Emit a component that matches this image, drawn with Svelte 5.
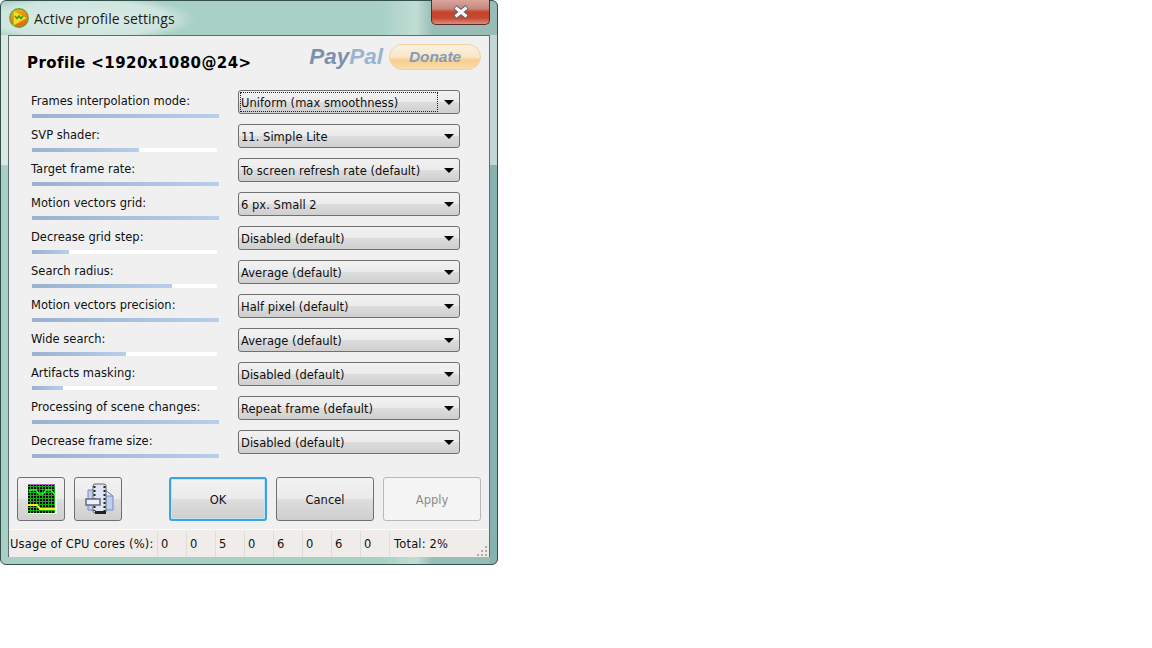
<script>
  const rows = [
    { label: 'Frames interpolation mode:', value: 'Uniform (max smoothness)', fill: 187, focus: true },
    { label: 'SVP shader:', value: '11. Simple Lite', fill: 107 },
    { label: 'Target frame rate:', value: 'To screen refresh rate (default)', fill: 187 },
    { label: 'Motion vectors grid:', value: '6 px. Small 2', fill: 187 },
    { label: 'Decrease grid step:', value: 'Disabled (default)', fill: 37 },
    { label: 'Search radius:', value: 'Average (default)', fill: 140 },
    { label: 'Motion vectors precision:', value: 'Half pixel (default)', fill: 187 },
    { label: 'Wide search:', value: 'Average (default)', fill: 94 },
    { label: 'Artifacts masking:', value: 'Disabled (default)', fill: 31 },
    { label: 'Processing of scene changes:', value: 'Repeat frame (default)', fill: 187 },
    { label: 'Decrease frame size:', value: 'Disabled (default)', fill: 187 }
  ];
  const cores = [0, 0, 5, 0, 6, 0, 6, 0];
</script>

<div class="window">
  <div class="titlebar">
    <svg class="logo" width="20" height="20" viewBox="0 0 20 20">
      <defs>
        <linearGradient id="orb" x1="0" y1="0" x2="0.3" y2="1">
          <stop offset="0" stop-color="#e0c020" />
          <stop offset="0.5" stop-color="#f08a10" />
          <stop offset="1" stop-color="#e86a10" />
        </linearGradient>
      </defs>
      <circle cx="10" cy="10" r="9.3" fill="url(#orb)" stroke="#55a832" stroke-width="1.2" />
      <path d="M4.5 2.5 L18 10 L4.5 17.5 Z" fill="#eee02a" stroke="#c8a010" stroke-width="0.5" />
      <path d="M6 8 L8 10.5 L10 8 L12 10.5 L14 8" fill="none" stroke="#3f9a20" stroke-width="1.5" />
    </svg>
    <span class="title">Active profile settings</span>
    <div class="close">
      <svg width="18" height="14" viewBox="0 0 18 14">
        <path d="M3 2 L15 12 M15 2 L3 12" stroke="#566070" stroke-width="5" />
        <path d="M3.5 2.5 L14.5 11.5 M14.5 2.5 L3.5 11.5" stroke="#f6f6f6" stroke-width="3.2" />
      </svg>
    </div>
  </div>

  <div class="client">
    <header class="head">
      <h1>Profile &lt;1920x1080@24&gt;</h1>
      <div class="paypal"><span class="pay">Pay</span><span class="pal">Pal</span></div>
      <div class="donate">Donate</div>
    </header>

    <div class="rows">
      {#each rows as r}
        <div class="row">
          <div class="left">
            <div class="label">{r.label}</div>
            <div class="track"><div class="fill" style="width:{r.fill}px"></div></div>
          </div>
          <div class="select">
            <span class="value" class:focus={r.focus}>{r.value}</span>
            <span class="arrow"></span>
          </div>
        </div>
      {/each}
    </div>

    <div class="actions">
      <button class="btn icon" aria-label="Graph">
        <svg class="glyph" width="29" height="30" viewBox="0 0 29 30">
          <defs>
            <pattern id="grid" width="3" height="3" patternUnits="userSpaceOnUse">
              <rect width="3" height="3" fill="#12b012" />
              <rect width="2" height="2" fill="#000" />
            </pattern>
          </defs>
          <rect width="29" height="30" fill="#f6f6f6" />
          <rect x="0" y="0" width="27" height="29" fill="url(#grid)" />
          <rect x="0" y="0" width="27" height="1" fill="#b060c0" />
          <path d="M1 7 L4 6 H8 L11 10 H15 L18 6 H23 L27 11" fill="none" stroke="#3cf03c" stroke-width="1.4" />
          <path d="M0 21 H9 L12 25 H27" fill="none" stroke="#f4f020" stroke-width="1.8" />
        </svg>
      </button>
      <button class="btn icon" aria-label="Profiles">
        <svg class="glyph" width="30" height="32" viewBox="0 0 30 32">
          <path d="M4 7 H21 L29 13 V27 H4 Z" fill="#bcd0f2" stroke="#7a8cb8" />
          <path d="M21 7 V13 H29 Z" fill="#e6eefb" stroke="#7a8cb8" />
          <rect x="9" y="1" width="13" height="29" rx="2" fill="#dfe6f2" stroke="#666" />
          <path d="M10.5 3 V28 M20.5 3 V28" stroke="#222" stroke-width="2" stroke-dasharray="2 2" />
          <rect x="2" y="16" width="14" height="6" fill="#eef1f8" stroke="#667090" stroke-width="1.6" />
          <rect x="11" y="28" width="11" height="3" fill="#222" />
        </svg>
      </button>
      <button class="btn main default">OK</button>
      <button class="btn main">Cancel</button>
      <button class="btn main disabled">Apply</button>
    </div>

    <footer class="status">
      <div class="cell usage">Usage of CPU cores (%):</div>
      {#each cores as c}
        <div class="cell core">{c}</div>
      {/each}
      <div class="cell total">Total: 2%</div>
      <svg class="grip" width="10" height="10" viewBox="0 0 10 10">
        <path d="M8 0h2v2H8z M8 4h2v2H8z M4 4h2v2H4z M8 8h2v2H8z M4 8h2v2H4z M0 8h2v2H0z" fill="#a8aeb0" />
      </svg>
    </footer>
  </div>
</div>

<style>
  :global(body) {
    margin: 0;
    background: #fff;
  }
  .window {
    box-sizing: border-box;
    width: 498px;
    height: 565px;
    padding: 0 7px 7px 7px;
    border: 1px solid #33504c;
    border-radius: 6px;
    display: flex;
    flex-direction: column;
    background:
      linear-gradient(#dbe8e4, #dbe8e4) 0 34px / 7px 130px no-repeat,
      linear-gradient(#c4d6d6, #c4d6d6) 100% 34px / 7px 130px no-repeat,
      linear-gradient(#86b1ae, #86b1ae) 100% 164px / 7px 400px no-repeat,
      linear-gradient(90deg, rgba(255, 255, 255, 0) 0 380px, rgba(255, 255, 255, 0.28) 415px, rgba(90, 120, 130, 0.22) 432px),
      #a8d0c4;
    font-family: "DejaVu Sans", sans-serif;
    color: #111;
  }
  .titlebar {
    height: 34px;
    flex: none;
    display: flex;
    align-items: center;
    position: relative;
    margin: 0 -7px;
    padding-left: 8px;
    background: radial-gradient(ellipse 115px 24px at 80px 18px, rgba(255, 255, 255, 0.6), rgba(255, 255, 255, 0.45) 75%, rgba(255, 255, 255, 0) 100%);
  }
  .logo {
    flex: none;
    margin-bottom: 1px;
  }
  .title {
    margin-left: 5px;
    font: 14px "Open Sans", sans-serif;
    letter-spacing: 0.05px;
    color: #1c1c1c;
  }
  .close {
    position: absolute;
    right: 7px;
    top: -1px;
    width: 59px;
    height: 25px;
    box-sizing: border-box;
    border: 1px solid #5c2a2a;
    border-top: none;
    border-radius: 0 0 5px 5px;
    background: linear-gradient(180deg, #d9a59c 0, #c98a7e 35%, #c8432a 50%, #c44a30 75%, #dc8f7c 100%);
    display: flex;
    align-items: center;
    justify-content: center;
  }
  .client {
    flex: 1;
    display: flex;
    flex-direction: column;
    background: #f0f0f0;
    border: 1px solid #5d6f6c;
    border-bottom-color: #3d4d4a;
    min-height: 0;
  }
  .head {
    height: 54px;
    flex: none;
    display: flex;
    align-items: center;
    padding: 0 8px 0 18px;
    box-sizing: border-box;
  }
  h1 {
    margin: 0 auto 2px 0;
    font: bold 15px "DejaVu Sans", sans-serif;
    color: #000;
    letter-spacing: 0.43px;
    position: relative;
    top: 1px;
  }
  .paypal {
    font: italic bold 22.5px "Liberation Sans", sans-serif;
    margin-right: 6px;
    margin-bottom: 12px;
  }
  .pay {
    color: #7d91af;
  }
  .pal {
    color: #9bb4d1;
  }
  .donate {
    box-sizing: border-box;
    width: 92px;
    height: 26px;
    margin-bottom: 12px;
    border: 1px solid #f6d29c;
    border-radius: 13px;
    background: linear-gradient(180deg, #f8f2e4 0, #f9e6c6 50%, #f8cf8e 62%, #f9dcae 100%);
    font: italic bold 15.4px "Liberation Sans", sans-serif;
    color: #819cbc;
    display: flex;
    align-items: center;
    justify-content: center;
  }
  .rows {
    display: flex;
    flex-direction: column;
    flex: none;
  }
  .row {
    height: 34px;
    display: flex;
    padding-left: 22px;
  }
  .left {
    width: 207px;
    flex: none;
  }
  .label {
    height: 20px;
    line-height: 23px;
    font-size: 11.5px;
    white-space: nowrap;
    margin-bottom: 4px;
  }
  .track {
    margin-left: 1px;
    width: 185px;
    height: 4px;
    background: #fff;
  }
  .fill {
    height: 4px;
    background: linear-gradient(90deg, #9ab2d0, #b6cfea);
  }
  .select {
    box-sizing: border-box;
    width: 222px;
    height: 24px;
    border: 1px solid #707070;
    border-radius: 3px;
    background: linear-gradient(180deg, #f2f2f2 0, #ebebeb 48%, #dcdcdc 52%, #cfcfcf 100%);
    display: flex;
    align-items: center;
    padding: 0 3px 0 1px;
    font-size: 11.5px;
    letter-spacing: 0.03px;
    white-space: nowrap;
  }
  .value {
    flex: 1;
    line-height: 20px;
    height: 18px;
    border: 1px dotted transparent;
    margin-right: 6px;
  }
  .value.focus {
    border-color: #222;
  }
  .arrow {
    flex: none;
    width: 0;
    height: 0;
    margin-right: 2px;
    border-left: 5px solid transparent;
    border-right: 5px solid transparent;
    border-top: 5px solid #000;
  }
  .actions {
    display: flex;
    padding: 13px 0 0 8px;
    flex: none;
  }
  .btn {
    box-sizing: border-box;
    height: 44px;
    border: 1px solid #707070;
    border-radius: 3px;
    background: linear-gradient(180deg, #f2f2f2 0, #ebebeb 48%, #dddddd 52%, #cfcfcf 100%);
    font: 11.5px "DejaVu Sans", sans-serif;
    color: #111;
    padding: 0;
    display: flex;
    align-items: center;
    justify-content: center;
  }
  .icon {
    width: 48px;
    margin-right: 9px;
  }
  .glyph {
    margin-left: 2px;
  }
  .icon + .icon {
    margin-right: 47px;
  }
  .main {
    width: 98px;
    margin-right: 9px;
    padding-top: 2px;
  }
  .default {
    border: 2px solid #3ca4d8;
    box-shadow: inset 0 0 0 1px #bfe4f6;
  }
  .disabled {
    border-color: #b8b8b8;
    background: #f4f4f4;
    color: #8c8c8c;
    margin-right: 0;
  }
  .status {
    margin-top: 8px;
    flex: 1;
    display: flex;
    background: #efecea;
    border-top: 1px solid #fbfbfb;
    position: relative;
    font-size: 11.5px;
    letter-spacing: 0.17px;
    line-height: 26px;
    padding-top: 1px;
  }
  .cell {
    box-sizing: border-box;
    height: 26px;
    white-space: nowrap;
  }
  .usage {
    width: 148px;
    padding-left: 1px;
  }
  .core {
    width: 29px;
    padding-left: 3px;
    border-left: 1px solid #dcdcdc;
  }
  .total {
    padding-left: 4px;
    border-left: 1px solid #dcdcdc;
    flex: 1;
  }
  .grip {
    position: absolute;
    right: 2px;
    bottom: 1px;
  }
</style>
